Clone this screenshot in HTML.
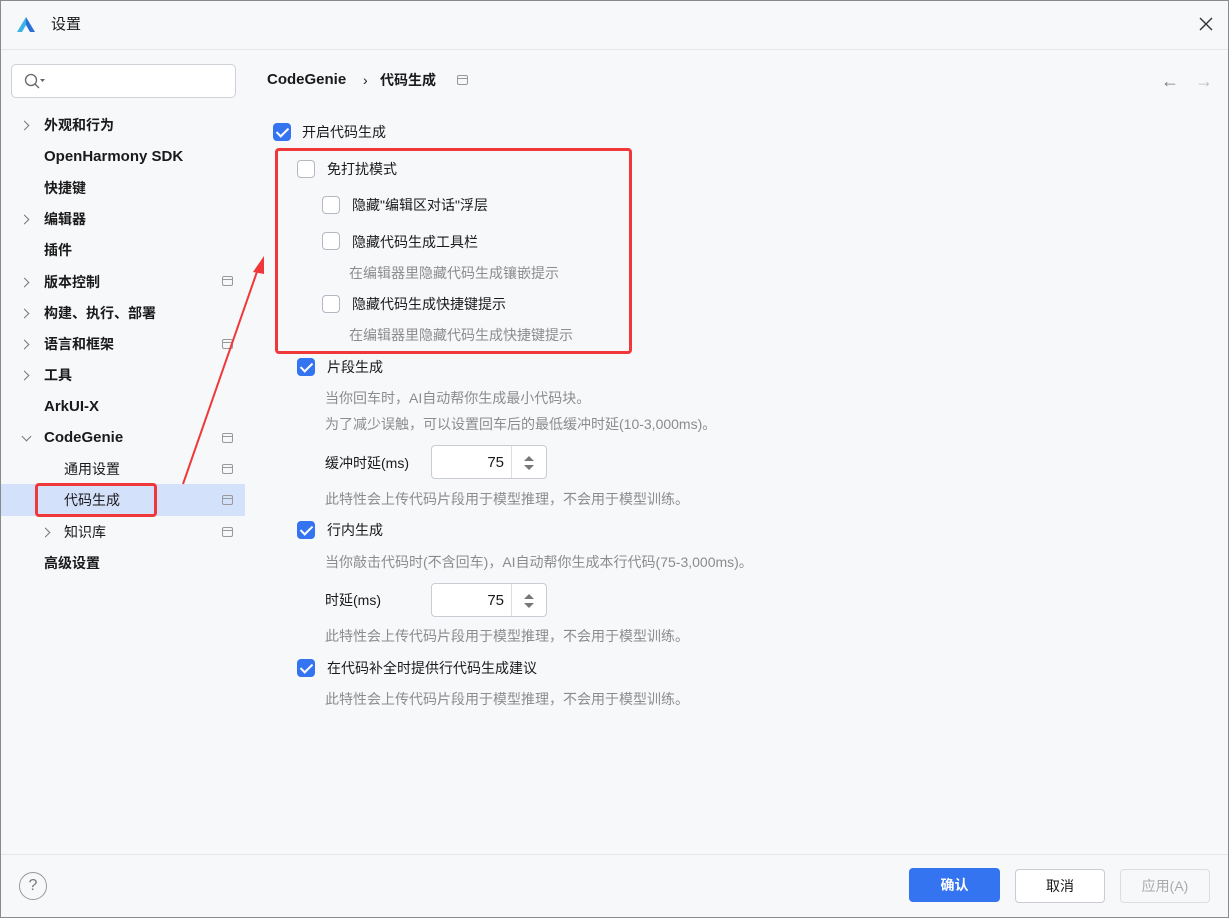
<!DOCTYPE html>
<html><head><meta charset="utf-8"><style>
*{margin:0;padding:0;box-sizing:border-box}
body{width:1229px;height:918px;background:#f7f8fa;font-family:"Liberation Sans","Noto Sans CJK SC",sans-serif;font-size:14px;color:#1a1a1a;position:relative;overflow:hidden}
.a{position:absolute;white-space:nowrap;line-height:20px}
.b{font-weight:bold}
.g{color:#8c8c8c}
.cb{position:absolute;width:18px;height:18px;border-radius:4px;border:1.5px solid #b5b8c0;background:#fff}
.cb.on{background:#3574f0;border-color:#3574f0}
.cb.on:after{content:"";position:absolute;left:5px;top:1px;width:5px;height:10px;border:solid #fff;border-width:0 2.5px 2.5px 0;transform:rotate(45deg)}
.chev{position:absolute;width:7px;height:7px;border:solid #777;border-width:0 1.3px 1.3px 0;transform:rotate(-45deg)}
.chev.d{transform:rotate(45deg)}
.pg{position:absolute;width:11px;height:10px;border:1.3px solid #999;border-radius:2px}
.pg:after{content:"";position:absolute;left:0;right:0;top:2px;border-top:1.3px solid #999}
.inp{position:absolute;width:116px;height:34px;background:#fff;border:1px solid #c9ccd3;border-radius:4px}
.inp span{position:absolute;right:42px;top:8px;font-size:15px;line-height:18px}
.inp i{position:absolute;right:34px;top:0;bottom:0;border-left:1px solid #dcdde1}
.btn{position:absolute;height:34px;border-radius:4px;display:flex;align-items:center;justify-content:center;font-size:14px}
</style></head><body>
<svg class="a" style="left:16px;top:16px" width="20" height="18" viewBox="0 0 20 18"><path d="M10 1 L19 16 H12 L10 12 Z" fill="#2a6fd6"/><path d="M10 1 L1 16 H8 L10 12 Z" fill="#3bb3e6"/><path d="M6 16 L10 9 L14 16 Z" fill="#f7f8fa"/></svg>
<div class="a" style="left:51px;top:15px;font-size:15px">设置</div>
<svg class="a" style="left:1199px;top:17px" width="14" height="14"><path d="M1 1L13 13M13 1L1 13" stroke="#333" stroke-width="1.4"/></svg>
<div class="a" style="left:0;top:49px;width:1229px;border-top:1px solid #e6e7ea"></div>
<div class="a" style="left:11px;top:64px;width:225px;height:34px;background:#fff;border:1px solid #cfd1d6;border-radius:5px"></div>
<svg class="a" style="left:23px;top:72px" width="24" height="18"><circle cx="8" cy="8" r="5.5" stroke="#666" fill="none" stroke-width="1.3"/><path d="M12 12L16 16" stroke="#666" stroke-width="1.3"/><path d="M17 7h5l-2.5 3z" fill="#666"/></svg>
<div class="a" style="left:0;top:484px;width:245px;height:32px;background:#d4e1fb"></div>
<div class="chev" style="left:21px;top:122px"></div><div class="a b" style="left:44px;top:115px">外观和行为</div>
<div class="a b" style="left:44px;top:147px;font-size:15px">OpenHarmony SDK</div>
<div class="a b" style="left:44px;top:178px">快捷键</div>
<div class="chev" style="left:21px;top:216px"></div><div class="a b" style="left:44px;top:209px">编辑器</div>
<div class="a b" style="left:44px;top:240px">插件</div>
<div class="chev" style="left:21px;top:279px"></div><div class="a b" style="left:44px;top:272px">版本控制</div><div class="pg" style="left:222px;top:276px"></div>
<div class="chev" style="left:21px;top:310px"></div><div class="a b" style="left:44px;top:303px">构建、执行、部署</div>
<div class="chev" style="left:21px;top:341px"></div><div class="a b" style="left:44px;top:334px">语言和框架</div><div class="pg" style="left:222px;top:339px"></div>
<div class="chev" style="left:21px;top:372px"></div><div class="a b" style="left:44px;top:365px">工具</div>
<div class="a b" style="left:44px;top:397px;font-size:15px">ArkUI-X</div>
<div class="chev d" style="left:23px;top:433px"></div><div class="a b" style="left:44px;top:428px;font-size:15px">CodeGenie</div><div class="pg" style="left:222px;top:433px"></div>
<div class="a" style="left:64px;top:459px">通用设置</div><div class="pg" style="left:222px;top:464px"></div>
<div class="a" style="left:64px;top:490px">代码生成</div><div class="pg" style="left:222px;top:495px"></div>
<div class="chev" style="left:42px;top:529px"></div><div class="a" style="left:64px;top:522px">知识库</div><div class="pg" style="left:222px;top:527px"></div>
<div class="a b" style="left:44px;top:553px">高级设置</div>
<div class="a" style="left:35px;top:483px;width:122px;height:34px;border:3px solid #f0383b;border-radius:4px"></div>
<svg class="a" style="left:175px;top:250px" width="100" height="240"><path d="M8 234 L84 16" stroke="#f0383b" stroke-width="2"/><path d="M89 6 L78 22 L89 24 Z" fill="#f0383b"/></svg>
<div class="a b" style="left:267px;top:70px;font-size:15px">CodeGenie</div>
<div class="a" style="left:363px;top:70px">›</div>
<div class="a b" style="left:380px;top:70px">代码生成</div>
<div class="pg" style="left:457px;top:75px"></div>
<div class="a" style="left:1161px;top:71px;color:#777;font-size:18px">←</div>
<div class="a" style="left:1195px;top:71px;color:#bbb;font-size:18px">→</div>
<div class="cb on" style="left:273px;top:123px"></div><div class="a" style="left:302px;top:122px">开启代码生成</div>
<div class="cb" style="left:297px;top:160px"></div><div class="a" style="left:327px;top:159px">免打扰模式</div>
<div class="cb" style="left:322px;top:196px"></div><div class="a" style="left:352px;top:195px">隐藏"编辑区对话"浮层</div>
<div class="cb" style="left:322px;top:232px"></div><div class="a" style="left:352px;top:232px">隐藏代码生成工具栏</div>
<div class="a g" style="left:349px;top:263px">在编辑器里隐藏代码生成镶嵌提示</div>
<div class="cb" style="left:322px;top:295px"></div><div class="a" style="left:352px;top:294px">隐藏代码生成快捷键提示</div>
<div class="a g" style="left:349px;top:325px">在编辑器里隐藏代码生成快捷键提示</div>
<div class="a" style="left:275px;top:148px;width:357px;height:206px;border:3px solid #f0383b;border-radius:4px"></div>
<div class="cb on" style="left:297px;top:358px"></div><div class="a" style="left:327px;top:357px">片段生成</div>
<div class="a g" style="left:325px;top:388px">当你回车时，AI自动帮你生成最小代码块。</div>
<div class="a g" style="left:325px;top:414px">为了减少误触，可以设置回车后的最低缓冲时延(10-3,000ms)。</div>
<div class="a" style="left:325px;top:453px">缓冲时延(ms)</div>
<div class="inp" style="left:431px;top:445px"><span>75</span><i></i><svg style="position:absolute;right:11px;top:9px" width="12" height="16"><path d="M1 6L6 1L11 6Z M1 10L6 15L11 10Z" fill="#777"/></svg></div>
<div class="a g" style="left:325px;top:489px">此特性会上传代码片段用于模型推理，不会用于模型训练。</div>
<div class="cb on" style="left:297px;top:521px"></div><div class="a" style="left:327px;top:520px">行内生成</div>
<div class="a g" style="left:325px;top:552px">当你敲击代码时(不含回车)，AI自动帮你生成本行代码(75-3,000ms)。</div>
<div class="a" style="left:325px;top:590px">时延(ms)</div>
<div class="inp" style="left:431px;top:583px"><span>75</span><i></i><svg style="position:absolute;right:11px;top:9px" width="12" height="16"><path d="M1 6L6 1L11 6Z M1 10L6 15L11 10Z" fill="#777"/></svg></div>
<div class="a g" style="left:325px;top:626px">此特性会上传代码片段用于模型推理，不会用于模型训练。</div>
<div class="cb on" style="left:297px;top:659px"></div><div class="a" style="left:327px;top:658px">在代码补全时提供行代码生成建议</div>
<div class="a g" style="left:325px;top:689px">此特性会上传代码片段用于模型推理，不会用于模型训练。</div>
<div class="a" style="left:0;top:854px;width:1229px;border-top:1px solid #e6e7ea"></div>
<div class="a" style="left:19px;top:872px;width:28px;height:28px;border:1.3px solid #999;border-radius:50%;text-align:center;line-height:26px;color:#777;font-size:16px">?</div>
<div class="btn" style="left:909px;top:868px;width:91px;background:#3574f0;color:#fff;font-weight:bold">确认</div>
<div class="btn" style="left:1015px;top:869px;width:90px;background:#fff;border:1px solid #c9ccd3">取消</div>
<div class="btn" style="left:1120px;top:869px;width:90px;border:1px solid #dcdde1;color:#aaa">应用(A)</div>
<div class="a" style="left:0;top:0;width:1229px;height:918px;border:1px solid #8a8a8a"></div>
</body></html>
